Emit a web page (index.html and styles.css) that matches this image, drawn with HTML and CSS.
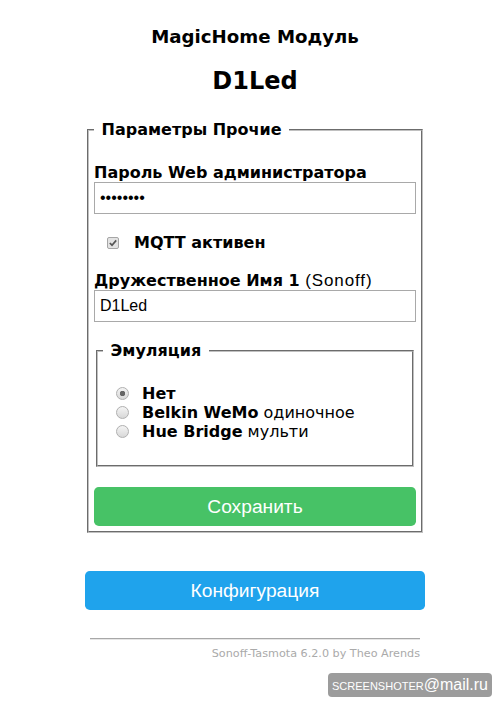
FILE: index.html
```html
<!DOCTYPE html>
<html>
<head>
<meta name="viewport" content="width=device-width, initial-scale=1">
<link rel="stylesheet" href="styles.css">
</head>
<body>

<div class="page">
  <h3>MagicHome Модуль</h3>
  <h2>D1Led</h2>

  <fieldset class="box">
    <legend>&nbsp;Параметры Прочие&nbsp;</legend>

    <div class="lbl">Пароль Web администратора</div>
    <input type="password" class="txt" value="********">

    <div class="check">
      <span class="cb">
        <svg width="12" height="12" viewBox="0 0 12 12">
          <rect x="0.5" y="0.5" width="11" height="11" rx="1.5" fill="#e3e3e3" stroke="#a6a6a6"/>
          <path d="M2.8 6 L5 8.2 L9.2 3.4" fill="none" stroke="#555" stroke-width="1.7"/>
        </svg>
      </span>
      <b>MQTT активен</b>
    </div>

    <div class="lbl">Дружественное Имя 1 <span class="note">(Sonoff)</span></div>
    <input type="text" class="txt" value="D1Led">

    <fieldset class="box inner">
      <legend>&nbsp;Эмуляция&nbsp;</legend>
      <div class="radios">
        <label class="radio"><input type="radio" name="emu" checked><b>Нет</b></label>
        <label class="radio"><input type="radio" name="emu"><b>Belkin WeMo</b>&nbsp;одиночное</label>
        <label class="radio"><input type="radio" name="emu"><b>Hue Bridge</b>&nbsp;мульти</label>
      </div>
    </fieldset>

    <button class="btn save">Сохранить</button>
  </fieldset>

  <button class="btn config">Конфигурация</button>

  <div class="footer">
    <hr>
    <span class="ver">Sonoff-Tasmota 6.2.0 by Theo Arends</span>
  </div>
</div>

<div class="shot">SCREENSHOTER<span class="at">@mail.ru</span></div>

</body>
</html>
```

FILE: styles.css
```css
/* Page base */
body {
  margin: 0;
  padding: 8px 8px 8px 20px;
  font-family: "DejaVu Sans", Verdana, sans-serif;
  font-size: 16px;
  color: #000;
  background: #fff;
}

.page {
  width: 340px;
  margin: 0 auto;
}

h3 {
  margin: 18px 0 0;
  font-size: 18.2px;
  line-height: 22px;
  text-align: center;
}

h2 {
  margin: 19px 0 25px;
  font-size: 24px;
  line-height: 28px;
  text-align: center;
}

/* Fieldsets */
.box {
  margin: 0 2px;
  padding: 5px;
  border: 2px groove #c0c0c0;
  background: #fff;
}

.box legend {
  padding: 0 2px;
  font-weight: bold;
  line-height: 19px;
}

.inner {
  margin-top: 19px;
  padding-bottom: 24px;
}

.lbl {
  margin-top: 19px;
  font-weight: bold;
  line-height: 19px;
}

.note {
  font-family: "Liberation Sans", Arial, sans-serif;
  font-weight: normal;
  font-size: 17px;
  letter-spacing: 0.9px;
}

/* Text inputs */
.txt {
  display: block;
  width: 100%;
  box-sizing: border-box;
  height: 32px;
  margin: 0;
  padding: 5px;
  border: 1px solid #a9a9a9;
  font-family: "Liberation Sans", Arial, sans-serif;
  font-size: 16px;
  color: #000;
}

/* Checkbox row */
.check {
  display: flex;
  align-items: center;
  margin-top: 19px;
  height: 19px;
}

.cb {
  display: flex;
  margin: 0 15px 0 13px;
}

/* Radio list */
.radios {
  margin-top: 19px;
}

.radio {
  display: flex;
  align-items: center;
  height: 19px;
}

.radio input {
  appearance: none;
  width: 13px;
  height: 13px;
  margin: 0 13px 0 13px;
  border: 1px solid #b0b0b0;
  border-radius: 50%;
  box-sizing: border-box;
  background: linear-gradient(#f4f4f4, #d8d8d8);
}

.radio input:checked {
  background: radial-gradient(circle, #666 0 2.5px, transparent 3px), linear-gradient(#f4f4f4, #d8d8d8);
}

/* Buttons */
.btn {
  display: block;
  width: 100%;
  height: 39px;
  border: 0;
  border-radius: 0.3rem;
  color: #fff;
  font-family: "Liberation Sans", Arial, sans-serif;
  font-size: 19.2px;
  line-height: 39px;
  padding: 0;
}

.save {
  margin-top: 20px;
  background-color: #47c266;
}

.config {
  margin-top: 38px;
  background-color: #1fa3ec;
}

/* Footer */
.footer {
  padding: 0 5px;
  text-align: right;
  font-size: 11.2px;
  line-height: 13px;
}

.footer hr {
  margin: 28px 0 7px;
  height: 0;
  border: 0;
  border-top: 1px solid #a8a8a8;
  border-bottom: 1px solid #e6e6e6;
}

.ver {
  color: #aaa;
}

/* Screenshot tool watermark */
.shot {
  position: absolute;
  left: 328px;
  top: 673px;
  width: 164px;
  height: 24px;
  border-radius: 4px;
  background: #9c9c9c;
  color: #fff;
  font-family: "Liberation Sans", Arial, sans-serif;
  font-size: 11px;
  line-height: 24px;
  text-align: center;
}

.shot .at {
  font-size: 16px;
}
```
